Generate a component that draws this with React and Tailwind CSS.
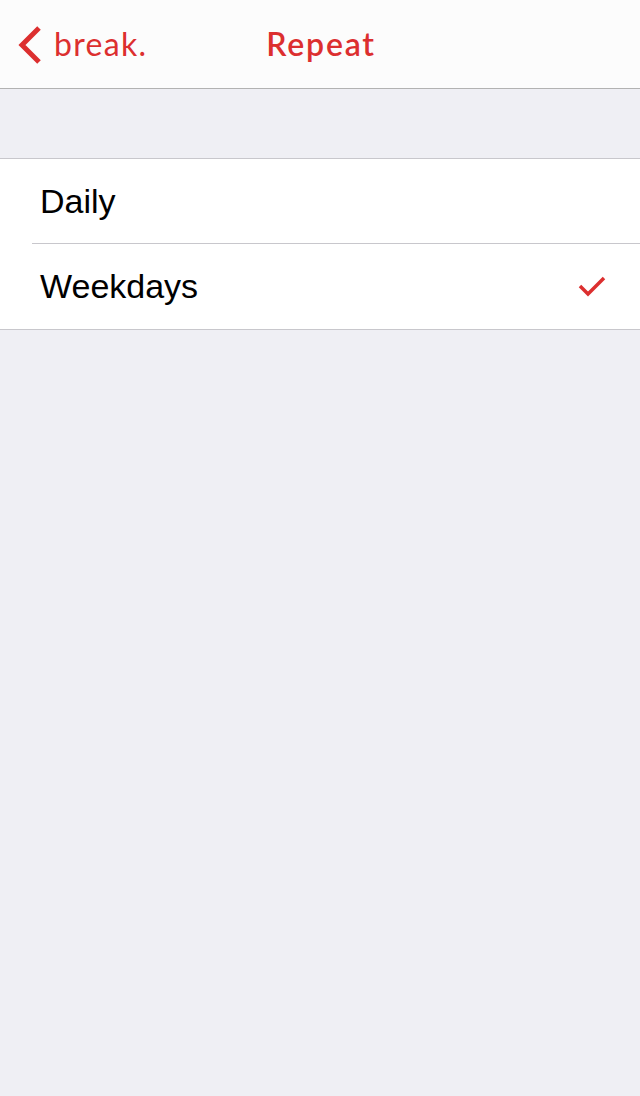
export default function App() {
  const red = "#dc2f2f";
  return (
    <div className="w-[640px] h-[1096px] bg-[#efeff4] flex flex-col" style={{ fontFamily: '"Liberation Sans", Arial, sans-serif' }}>
      <div className="h-[89px] bg-[#fcfcfc] border-b border-[#b2b2b2] flex items-center relative shrink-0">
        <div className="flex items-center pl-[17px] gap-[11px]">
          <svg width="26" height="40" viewBox="0 0 26 40" className="mt-[1px]">
            <path d="M22 3 L5 20 L22 37" fill="none" stroke={red} strokeWidth="5" strokeLinecap="butt" strokeLinejoin="miter" />
          </svg>
          <span className="text-[32px] leading-none text-[#dc2f2f] tracking-[1.3px]" style={{ fontFamily: 'Lato, "Open Sans", sans-serif' }}>break.</span>
        </div>
        <div className="absolute left-0 right-0 flex justify-center pointer-events-none">
          <span className="text-[32px] leading-none font-semibold text-[#dc2f2f] tracking-[1.8px] pl-[2px]" style={{ fontFamily: 'Lato, "Open Sans", sans-serif' }}>Repeat</span>
        </div>
      </div>
      <div className="h-[69px] shrink-0" />
      <div className="bg-white border-t border-b border-[#c8c7cc] shrink-0">
        <div className="h-[84px] flex items-center pl-[40px] text-[34px] text-black">Daily</div>
        <div className="ml-[32px] h-px bg-[#c8c7cc]" />
        <div className="h-[85px] flex items-center justify-between pl-[40px] pr-[34px] text-[34px] text-black">
          <span>Weekdays</span>
          <svg width="28" height="22" viewBox="0 0 28 22">
            <path d="M2 10 L10 18 L26 2" fill="none" stroke={red} strokeWidth="3.5" />
          </svg>
        </div>
      </div>
    </div>
  );
}
